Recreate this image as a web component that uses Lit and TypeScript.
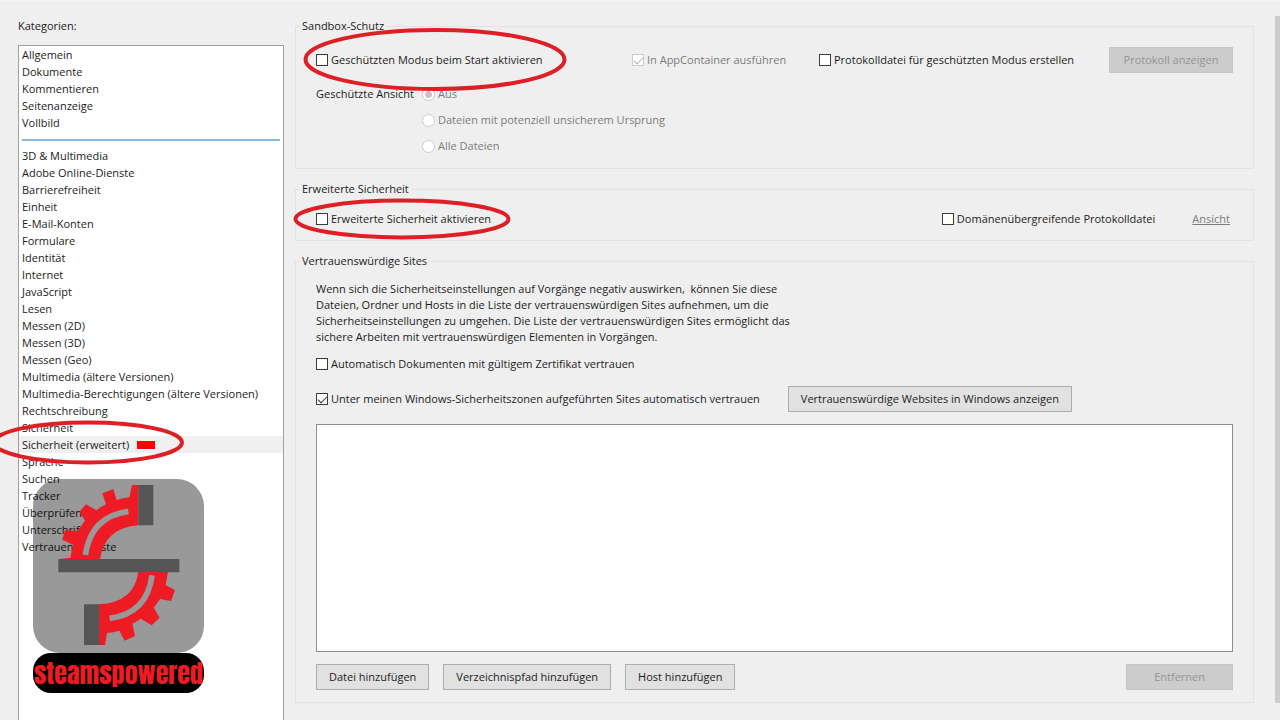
import { LitElement, html, css, svg } from "lit";
import { customElement, state } from "lit/decorators.js";
import { classMap } from "lit/directives/class-map.js";

const GENERAL = ["Allgemein", "Dokumente", "Kommentieren", "Seitenanzeige", "Vollbild"];
const TOPICS = [
  "3D & Multimedia",
  "Adobe Online-Dienste",
  "Barrierefreiheit",
  "Einheit",
  "E-Mail-Konten",
  "Formulare",
  "Identität",
  "Internet",
  "JavaScript",
  "Lesen",
  "Messen (2D)",
  "Messen (3D)",
  "Messen (Geo)",
  "Multimedia (ältere Versionen)",
  "Multimedia-Berechtigungen (ältere Versionen)",
  "Rechtschreibung",
  "Sicherheit",
  "Sicherheit (erweitert)",
  "Sprache",
  "Suchen",
  "Tracker",
  "Überprüfen",
  "Unterschriften",
  "Vertrauensdienste",
];
const MARKED = "Sicherheit (erweitert)";

@customElement("brand-logo")
export class BrandLogo extends LitElement {
  static styles = css`
    :host {
      display: block;
      width: 171px;
    }
    .mark {
      display: block;
      width: 171px;
      height: 174px;
    }
    .name {
      display: flex;
      justify-content: center;
      align-items: center;
      height: 40px;
      border-radius: 18px;
      background: #000;
      color: #ed1c24;
      font: 26px/38px Anton, "Liberation Sans Narrow", "Liberation Sans", sans-serif;
      white-space: nowrap;
    }
  `;

  render() {
    return html`
      <svg class="mark" viewBox="24 12 513 522" aria-hidden="true">
        <rect x="24" y="12" width="513" height="522" rx="82" fill="#000" fill-opacity="0.4" />
        <path
          fill="#ed1c24"
          d="M340 30H321L313 67Q292 69 275 75L265 42 232 55 243 88Q228 95 214 106L183 88 163 110 180 137Q168 152 158 169L120 165 112 194 145 210Q138 230 136 248L100 253H225Q240 158 340 151Z"
        />
        <path
          fill="#ed1c24"
          d="M340 291H429L422 330 450 345 438 378 405 372Q396 386 386 398L404 428 380 451 347 431Q334 440 322 446L330 483 299 497 283 467Q265 473 246 474L240 510H222V388Q328 382 340 291Z"
        />
        <path fill="none" stroke="#999" stroke-width="17" d="M310 109Q198 124 181 240" />
        <path fill="none" stroke="#999" stroke-width="17" d="M381 301Q366 416 254 430" />
        <path fill="#555" d="M340 30h45v121h-45zM100 252h363v40H100zM177 388h46v122h-46z" />
      </svg>
      <div class="name">steamspowered</div>
    `;
  }
}

@customElement("app-root")
export class AppRoot extends LitElement {
  @state() private selected = MARKED;

  static styles = css`
    :host {
      display: block;
      position: relative;
      overflow: hidden;
      height: 100vh;
      background: #efefef;
      color: #1c1c1c;
      font: 11px/16px "Open Sans", "Noto Sans", sans-serif;
    }
    * {
      box-sizing: border-box;
    }
    .page {
      display: grid;
      grid-template-columns: 266px minmax(0, 1fr) 5px;
      height: 100%;
      padding-left: 18px;
      border-top: 1px solid #f4f4f4;
    }
    .side {
      display: flex;
      flex-direction: column;
      min-height: 0;
      padding-top: 17px;
    }
    .side-title {
      margin: 0 0 11px;
      font: inherit;
    }
    .list {
      flex: 1;
      min-height: 0;
      overflow: hidden;
      margin: 0;
      padding: 0;
      list-style: none;
      background: #fff;
      border: 1px solid #a0a0a0;
      border-bottom: 0;
    }
    .entry {
      display: flex;
      align-items: center;
      gap: 8px;
      width: 100%;
      height: 17px;
      padding: 0 3px;
      border: 0;
      background: none;
      color: inherit;
      font: inherit;
      text-align: left;
      white-space: nowrap;
    }
    .entry.current {
      background: #f0f0f0;
    }
    .flag {
      width: 18px;
      height: 8px;
      background: #f00;
    }
    .divider {
      height: 16px;
      padding: 8px 3px 6px;
    }
    .rule {
      height: 2px;
      margin: 0;
      border: 0;
      background: #85b8dc;
    }
    .main {
      display: flex;
      flex-direction: column;
      gap: 12px;
      min-height: 0;
      padding: 17px 21px 17px 11px;
    }
    .group {
      display: flex;
      flex-direction: column;
      min-width: 0;
      margin: 0;
      padding: 9px 20px 8px;
      border: 1px solid #e2e2e2;
    }
    .group.sandbox {
      padding: 13px 20px 9px;
    }
    .group.sites {
      flex: 1;
      padding: 12px 20px;
    }
    .legend {
      margin-left: -16px;
      padding: 0 2px;
    }
    .row {
      display: flex;
      align-items: center;
      gap: 14px;
      min-height: 26px;
    }
    .row.modes {
      display: grid;
      grid-template-columns: 316fr 187fr 290fr 124fr;
      gap: 0;
      margin-bottom: 8px;
    }
    .view {
      display: grid;
      grid-template-columns: 106px 1fr;
      grid-auto-rows: 26px;
      align-items: center;
    }
    .view-choice {
      grid-column: 2;
    }
    .view-title {
      grid-row: 1;
    }
    .check {
      display: flex;
      align-items: center;
      gap: 3px;
      white-space: nowrap;
    }
    .check.off {
      color: #7c7c7c;
    }
    .box {
      appearance: none;
      flex: none;
      display: grid;
      place-items: center;
      width: 12px;
      height: 12px;
      margin: 0;
      border: 1px solid #3c3c3c;
      background: #fff;
    }
    .box:checked::after {
      content: "";
      width: 8px;
      height: 4px;
      border: solid #333;
      border-width: 0 0 1px 1px;
      transform: translateY(-1px) rotate(-45deg);
    }
    .box:disabled {
      border-color: #ccc;
    }
    .box:disabled::after {
      border-color: #b4b4b4;
    }
    .dot {
      appearance: none;
      flex: none;
      width: 13px;
      height: 13px;
      margin: 0;
      border: 1px solid #ccc;
      border-radius: 50%;
      background: #fff;
    }
    .dot:checked {
      background: radial-gradient(circle, #c4c4c4 3px, #fff 4px);
    }
    .push {
      margin-left: auto;
    }
    .link {
      margin: 0 3px 0 23px;
      color: #7c7c7c;
      text-decoration: underline;
    }
    .btn {
      height: 26px;
      padding: 0 12px;
      border: 1px solid #adadad;
      background: #e1e1e1;
      color: inherit;
      font: inherit;
      white-space: nowrap;
    }
    .btn:disabled {
      border-color: #c6c6c6;
      background: #ccc;
      color: #949494;
    }
    .btn.remove {
      padding: 0 27px;
    }
    .intro {
      margin: 0 0 6px;
      white-space: pre-line;
    }
    .zones {
      gap: 28px;
      margin: 9px 0 12px;
    }
    .hosts {
      flex: 1;
      width: 100%;
      min-height: 60px;
      margin: 0 0 12px;
      border: 1px solid #8e8e8e;
      border-radius: 0;
      background: #fff;
      resize: none;
      font: inherit;
    }
    .scroll {
      margin: 15px 0 17px;
      background: #cdcdcd;
    }
    .marks {
      position: absolute;
      top: 0;
      left: 0;
      pointer-events: none;
    }
    .brand {
      position: absolute;
      top: 479px;
      left: 33px;
    }
  `;

  private entry(name: string) {
    return html`<li>
      <button
        class=${classMap({ entry: true, current: name === this.selected })}
        @click=${() => (this.selected = name)}
      >
        ${name}${name === MARKED ? html`<span class="flag"></span>` : ""}
      </button>
    </li>`;
  }

  private check(label: string, checked = false, disabled = false) {
    return html`<label class=${classMap({ check: true, off: disabled })}>
      <input class="box" type="checkbox" .checked=${checked} ?disabled=${disabled} />${label}
    </label>`;
  }

  private viewChoice(label: string, checked = false) {
    return html`<label class="check off view-choice">
      <input class="dot" type="radio" name="view" .checked=${checked} disabled />${label}
    </label>`;
  }

  private ring(cx: number, cy: number, rx: number, ry: number) {
    return svg`<ellipse cx=${cx} cy=${cy} rx=${rx} ry=${ry} fill="none" stroke="#df1f26" stroke-width="4" />`;
  }

  render() {
    return html`
      <div class="page">
        <nav class="side">
          <h2 class="side-title">Kategorien:</h2>
          <ul class="list">
            ${GENERAL.map((n) => this.entry(n))}
            <li class="divider"><hr class="rule" /></li>
            ${TOPICS.map((n) => this.entry(n))}
          </ul>
        </nav>
        <main class="main">
          <fieldset class="group sandbox">
            <legend class="legend">Sandbox-Schutz</legend>
            <div class="row modes">
              ${this.check("Geschützten Modus beim Start aktivieren")}
              ${this.check("In AppContainer ausführen", true, true)}
              ${this.check("Protokolldatei für geschützten Modus erstellen")}
              <button class="btn" disabled>Protokoll anzeigen</button>
            </div>
            <div class="view" role="radiogroup" aria-labelledby="view-title">
              <span class="view-title" id="view-title">Geschützte Ansicht</span>
              ${this.viewChoice("Aus", true)}
              ${this.viewChoice("Dateien mit potenziell unsicherem Ursprung")}
              ${this.viewChoice("Alle Dateien")}
            </div>
          </fieldset>
          <fieldset class="group">
            <legend class="legend">Erweiterte Sicherheit</legend>
            <div class="row">
              ${this.check("Erweiterte Sicherheit aktivieren")}
              <span class="push">${this.check("Domänenübergreifende Protokolldatei")}</span>
              <a class="link" href="#">Ansicht</a>
            </div>
          </fieldset>
          <fieldset class="group sites">
            <legend class="legend">Vertrauenswürdige Sites</legend>
            <p class="intro">Wenn sich die Sicherheitseinstellungen auf Vorgänge negativ auswirken,&nbsp; können Sie diese
Dateien, Ordner und Hosts in die Liste der vertrauenswürdigen Sites aufnehmen, um die
Sicherheitseinstellungen zu umgehen. Die Liste der vertrauenswürdigen Sites ermöglicht das
sichere Arbeiten mit vertrauenswürdigen Elementen in Vorgängen.</p>
            <div class="row">${this.check("Automatisch Dokumenten mit gültigem Zertifikat vertrauen")}</div>
            <div class="row zones">
              ${this.check("Unter meinen Windows-Sicherheitszonen aufgeführten Sites automatisch vertrauen", true)}
              <button class="btn">Vertrauenswürdige Websites in Windows anzeigen</button>
            </div>
            <textarea class="hosts" aria-label="Vertrauenswürdige Sites" readonly></textarea>
            <div class="row">
              <button class="btn">Datei hinzufügen</button>
              <button class="btn">Verzeichnispfad hinzufügen</button>
              <button class="btn">Host hinzufügen</button>
              <button class="btn remove push" disabled>Entfernen</button>
            </div>
          </fieldset>
        </main>
        <div class="scroll"></div>
      </div>
      <svg class="marks" width="600" height="480" aria-hidden="true">
        ${this.ring(435, 59.5, 129.5, 29.5)} ${this.ring(402, 219, 106.5, 18.5)}
        ${this.ring(88, 442.5, 94, 20)}
      </svg>
      <brand-logo class="brand"></brand-logo>
    `;
  }
}
